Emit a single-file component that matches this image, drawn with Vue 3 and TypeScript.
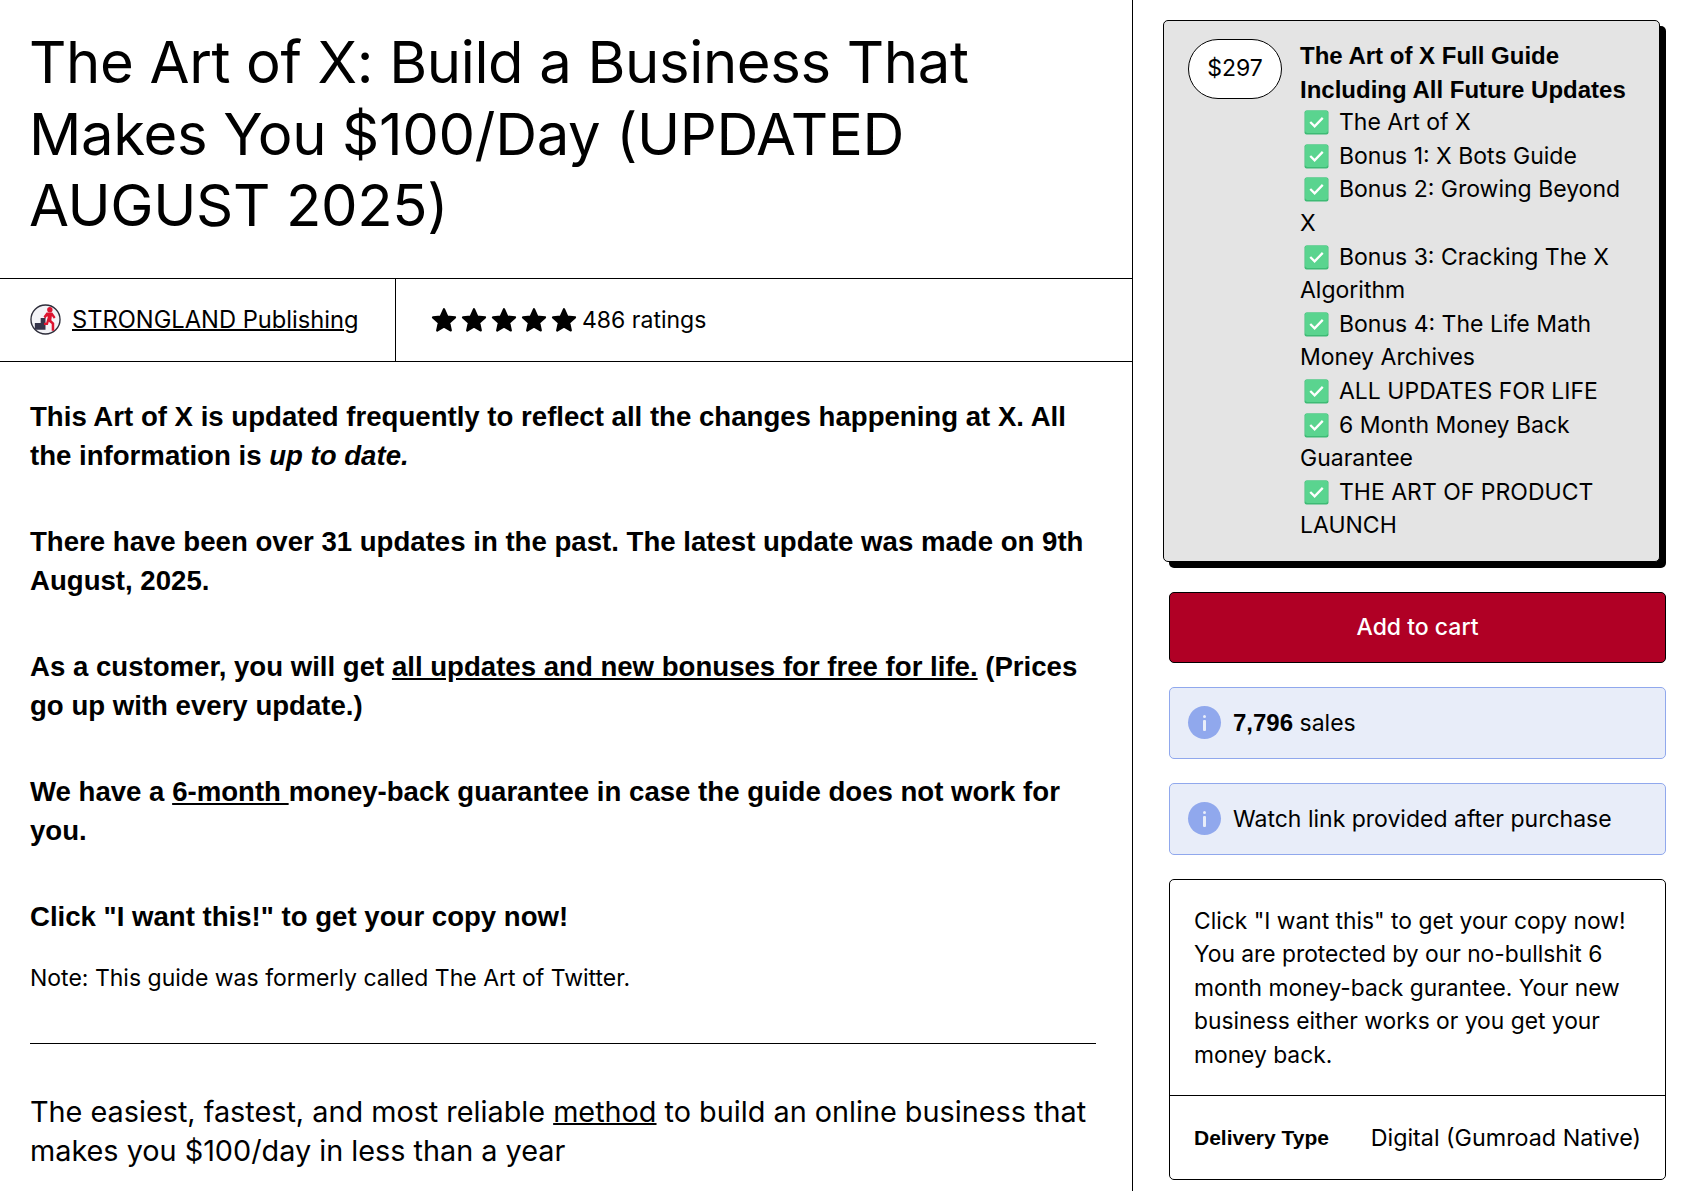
<template>
  <div class="page">
    <main class="main">
      <h1 class="title">The Art of X: Build a Business That Makes You $100/Day (UPDATED AUGUST 2025)</h1>

      <div class="meta">
        <div class="author">
          <svg class="avatar" viewBox="0 0 32 32" aria-hidden="true">
            <circle cx="16" cy="16" r="15" fill="#f3f3f7" stroke="#2d2d3a" stroke-width="1.4" />
            <path d="M5 26.5v-7h6v-5h5v12z" fill="#34344a" />
            <circle cx="20.5" cy="6" r="2.8" fill="#dc1430" />
            <path d="M14 13l3-4.2h6l3.4 5-1.8 1.3-2-2.6-.6 4.4 3 2.6v8h-2.6v-6.8l-3-2.4-1 3.4h-4v-2.4h2.3l1.8-6.4-1.4.2-1.4 2z" fill="#dc1430" />
          </svg>
          <a class="author-link" href="#">STRONGLAND Publishing</a>
        </div>
        <div class="rating">
          <svg v-for="n in 5" :key="n" class="star" viewBox="0 0 24 24" aria-hidden="true">
            <path d="M12 2l3 6.8 7.2.8-5.4 4.9 1.5 7.2L12 18.1l-6.3 3.6 1.5-7.2-5.4-4.9 7.2-.8z" fill="#000" stroke="#000" stroke-width="2" stroke-linejoin="round" />
          </svg>
          <span class="rating-text">486 ratings</span>
        </div>
      </div>

      <div class="description">
        <p class="strong">This Art of X is updated frequently to reflect all the changes happening at X. All the information is <em>up to date.</em></p>
        <p class="strong">There have been over 31 updates in the past. The latest update was made on 9th August, 2025.</p>
        <p class="strong">As a customer, you will get <u>all updates and new bonuses for free for life.</u> (Prices go up with every update.)</p>
        <p class="strong">We have a <u>6-month </u>money-back guarantee in case the guide does not work for you.</p>
        <p class="strong cta">Click "I want this!" to get your copy now!</p>
        <p class="note">Note: This guide was formerly called The Art of Twitter.</p>
        <hr class="rule" />
        <p class="lead">The easiest, fastest, and most reliable <a href="#">method</a> to build an online business that makes you $100/day in less than a year</p>
      </div>
    </main>

    <aside class="side">
      <div class="option">
        <div class="price">$297</div>
        <div class="option-body">
          <div class="option-title">The Art of X Full Guide Including All Future Updates</div>
          <div v-for="item in items" :key="item" class="option-line">
            <svg class="tick" viewBox="0 0 24 24" aria-hidden="true">
              <rect x="0.5" y="0.5" width="23" height="23" rx="2" fill="#3dba74" />
              <rect x="1" y="0.5" width="22" height="21.5" rx="2" fill="#5ad48f" />
              <path d="M6 11.5l4.2 4.2L18 7.6" fill="none" stroke="#fff" stroke-width="2.2" />
            </svg>{{ item }}
          </div>
        </div>
      </div>

      <button class="cart" type="button">Add to cart</button>

      <div v-for="(info, i) in notices" :key="i" class="notice">
        <span class="info-icon"><span class="info-dot"></span><span class="info-bar"></span></span>
        <span><b v-if="info.count">{{ info.count }}</b> {{ info.text }}</span>
      </div>

      <div class="details">
        <p class="details-text">Click "I want this" to get your copy now! You are protected by our no-bullshit 6 month money-back gurantee. Your new business either works or you get your money back.</p>
        <div class="details-row">
          <b>Delivery Type</b>
          <span>Digital (Gumroad Native)</span>
        </div>
      </div>
    </aside>
  </div>
</template>

<script setup lang="ts">
interface Notice {
  count?: string
  text: string
}

const items: string[] = [
  'The Art of X',
  'Bonus 1: X Bots Guide',
  'Bonus 2: Growing Beyond X',
  'Bonus 3: Cracking The X Algorithm',
  'Bonus 4: The Life Math Money Archives',
  'ALL UPDATES FOR LIFE',
  '6 Month Money Back Guarantee',
  'THE ART OF PRODUCT LAUNCH'
]

const notices: Notice[] = [
  { count: '7,796', text: 'sales' },
  { text: 'Watch link provided after purchase' }
]
</script>

<style>
html,
body {
  margin: 0;
  background: #fff;
  overflow: hidden;
}
</style>

<style scoped>
.page {
  display: grid;
  grid-template-columns: 1133px 560px;
  height: 1191px;
  overflow: hidden;
  color: #000;
  font-family: Inter, "Liberation Sans", sans-serif;
}

.main {
  border-right: 1px solid #000;
}

.title {
  margin: 0;
  padding: 27px 36px 36px 29px;
  font-size: 58px;
  font-weight: 400;
  line-height: 71.5px;
  letter-spacing: -0.35px;
}

.meta {
  display: flex;
  height: 82px;
  border-top: 1px solid #000;
  border-bottom: 1px solid #000;
}

.author {
  display: flex;
  align-items: center;
  gap: 11px;
  width: 396px;
  padding-left: 30px;
  box-sizing: border-box;
  border-right: 1px solid #000;
  font-size: 23.7px;
}

.avatar {
  width: 31px;
  height: 31px;
}

.author-link {
  color: #000;
  text-decoration-thickness: 2px;
}

.rating {
  display: flex;
  align-items: center;
  gap: 4px;
  padding-left: 35px;
  font-size: 23px;
}

.star {
  width: 26px;
  height: 26px;
}

.rating-text {
  margin-left: 1px;
}

.description {
  padding: 35px 36px 0 30px;
}

.strong {
  margin: 0 0 47px;
  font-family: "Liberation Sans", Arial, sans-serif;
  font-size: 27.6px;
  font-weight: 700;
  line-height: 39px;
}

.cta {
  margin-bottom: 23px;
}

.note {
  margin: 0;
  font-size: 23px;
  line-height: 39px;
}

.rule {
  margin: 45px 0 48px;
  border: 0;
  border-top: 1px solid #000;
}

.lead {
  margin: 0;
  font-size: 28.8px;
  line-height: 39px;
}

.lead a {
  color: #000;
  text-decoration-thickness: 2px;
}

.side {
  display: flex;
  flex-direction: column;
  gap: 24px;
  padding: 20px 27px 0 36px;
  min-width: 0;
}

.option {
  display: flex;
  gap: 18px;
  margin: 0 6px 6px -6px;
  padding: 18px 24px;
  background: #e4e4e4;
  border: 1px solid #000;
  border-radius: 5px;
  box-shadow: 6px 6px 0 #000;
  font-size: 23px;
  line-height: 33.6px;
}

.price {
  flex: none;
  display: flex;
  align-items: center;
  justify-content: center;
  width: 94px;
  height: 60px;
  background: #fff;
  border: 1px solid #000;
  border-radius: 30px;
  box-sizing: border-box;
}

.option-title {
  font-family: "Liberation Sans", Arial, sans-serif;
  font-size: 24px;
  font-weight: 700;
}

.tick {
  width: 25px;
  height: 25px;
  margin: 0 10px 0 4px;
  vertical-align: -5px;
}

.cart {
  height: 71px;
  background: #b00025;
  border: 1px solid #000;
  border-radius: 5px;
  color: #fff;
  font-family: inherit;
  font-size: 23px;
  font-weight: 500;
}

.notice {
  display: flex;
  align-items: center;
  gap: 12px;
  height: 72px;
  padding: 0 18px;
  background: #e8edf9;
  border: 1px solid #90a8ed;
  border-radius: 5px;
  box-sizing: border-box;
  font-size: 23px;
}

.notice b {
  font-family: "Liberation Sans", Arial, sans-serif;
  font-size: 24px;
}

.info-icon {
  flex: none;
  display: flex;
  flex-direction: column;
  align-items: center;
  justify-content: center;
  gap: 2px;
  width: 33px;
  height: 33px;
  background: #90a8ed;
  border-radius: 50%;
}

.info-dot {
  width: 3px;
  height: 3px;
  background: #e8edf9;
  border-radius: 50%;
}

.info-bar {
  width: 3px;
  height: 11px;
  background: #e8edf9;
  border-radius: 1px;
}

.details {
  border: 1px solid #000;
  border-radius: 5px;
  font-size: 22.8px;
  line-height: 33.4px;
}

.details-text {
  margin: 0;
  padding: 24px 24px 24px;
  border-bottom: 1px solid #000;
}

.details-row {
  display: flex;
  justify-content: space-between;
  align-items: center;
  height: 83px;
  padding: 0 24px;
  box-sizing: border-box;
  font-size: 23.3px;
}

.details-row b {
  font-family: "Liberation Sans", Arial, sans-serif;
  font-size: 21px;
}
</style>
